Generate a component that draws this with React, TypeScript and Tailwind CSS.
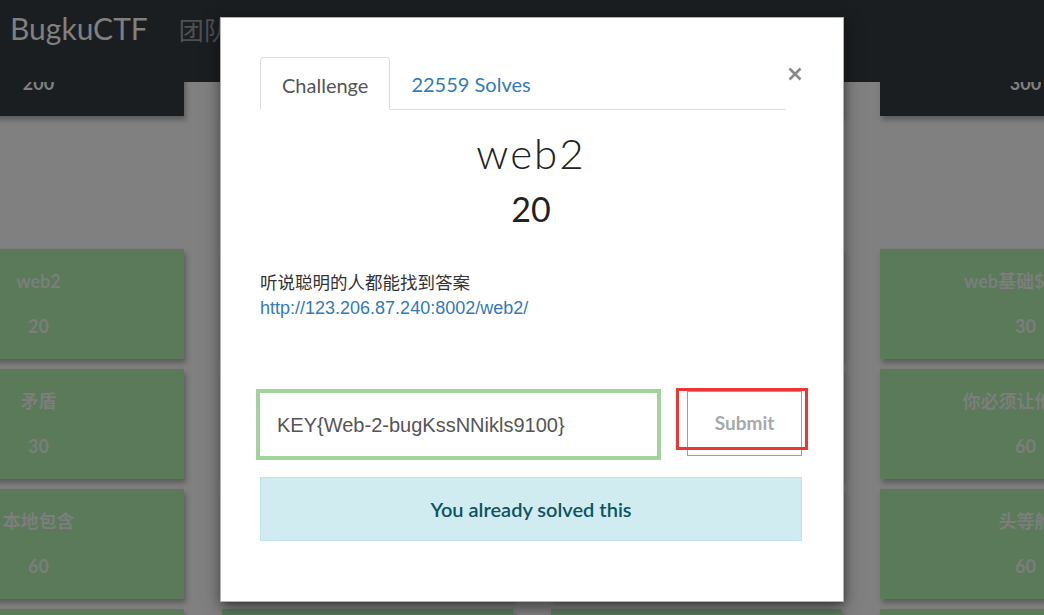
import React from "react";

type Card = { title: string; points: string; dark?: boolean };

const rows: Card[][] = [
  [
    { title: "Web签到", points: "200", dark: true },
    { title: "计算器", points: "100", dark: true },
    { title: "web基础$_POST", points: "200", dark: true },
    { title: "秋名山老司机", points: "300", dark: true },
  ],
  [
    { title: "web2", points: "20" },
    { title: "计算器", points: "30" },
    { title: "web基础$_POST", points: "30" },
    { title: "web基础$_GET", points: "30" },
  ],
  [
    { title: "矛盾", points: "30" },
    { title: "web3", points: "30" },
    { title: "域名解析", points: "30" },
    { title: "你必须让他停下", points: "60" },
  ],
  [
    { title: "本地包含", points: "60" },
    { title: "变量1", points: "60" },
    { title: "web5", points: "60" },
    { title: "头等舱", points: "60" },
  ],
  [
    { title: "网站被黑", points: "80" },
    { title: "管理员系统", points: "80" },
    { title: "web4", points: "80" },
    { title: "flag在index里", points: "80" },
  ],
];

function ChallengeCard({ card }: { card: Card }) {
  return (
    <div
      className={
        "w-[291px] h-[110px] shrink-0 flex flex-col items-center pt-[19px] shadow-[2px_4px_5px_rgba(0,0,0,0.28)] " +
        (card.dark ? "bg-[#1b1e21] text-[#808080]" : "bg-[#5a7a5a] text-[#7b7e7b]")
      }
    >
      <div className="text-[18px] leading-[26px] font-bold whitespace-nowrap">{card.title}</div>
      <div className="mt-[19px] text-[18px] leading-[27px] font-bold">{card.points}</div>
    </div>
  );
}

export default function App() {
  const navItems = ["团队", "排行榜", "下载", "归档", "友链", "论坛"];
  return (
    <div
      className="relative w-[1044px] h-[615px] overflow-hidden bg-[#808080]"
      style={{ fontFamily: "Lato, 'Noto Sans CJK SC', sans-serif" }}
    >
      {/* challenge board */}
      <div className="flex flex-col gap-[10px] pt-[6px] ml-[-107px]">
        {rows.map((row, i) => (
          <div key={i} className={"flex gap-[38px] " + (i === 0 ? "mb-[123px]" : "")}>
            {row.map((c, j) => (
              <ChallengeCard key={j} card={c} />
            ))}
          </div>
        ))}
      </div>

      {/* navbar */}
      <nav className="absolute top-0 left-0 right-0 h-[82px] bg-[#1b1e21] z-10 flex items-start pt-[7px] pl-[10px]">
        <span className="text-[30px] leading-[42px] text-[#808080]">BugkuCTF</span>
        <div className="flex gap-[28px] ml-[31px] mt-[2px]">
          {navItems.map((n) => (
            <span
              key={n}
              className="text-[25px] leading-[40px] text-[#4e5154]"
              style={{ fontFamily: "'Noto Sans CJK SC', sans-serif" }}
            >
              {n}
            </span>
          ))}
        </div>
      </nav>

      {/* modal */}
      <div className="absolute left-[220px] top-[17px] z-20 w-[624px] h-[585px] bg-white border border-black/30 shadow-[0_5px_15px_rgba(0,0,0,0.5)] pt-[39px] pl-[39px] pr-[41px]">
        <div className="flex items-start">
          <div className="flex w-[526px] border-b border-[#dddddd]">
            <div className="h-[53px] -mb-px px-[21px] pt-[2px] flex items-center border border-[#dddddd] border-b-white rounded-t-[4px] bg-white text-[20px] text-[#555555]">
              Challenge
            </div>
            <div className="h-[52px] px-[21px] pt-[2px] flex items-center text-[20px] text-[#337ab7]">
              22559 Solves
            </div>
          </div>
          <button className="ml-[2px] mt-[10px] w-[14px] h-[14px] flex items-center justify-center">
            <svg width="14" height="14" viewBox="0 0 14 14">
              <path d="M1.5 1.5 L12.5 12.5 M12.5 1.5 L1.5 12.5" stroke="#8a8a8a" strokeWidth="2.6" strokeLinecap="butt" />
            </svg>
          </button>
        </div>

        <div className="w-[542px] flex flex-col">
          <div className="mt-[19px] text-center text-[42px] leading-[48px] font-light tracking-[2px] text-[#222222]">
            web2
          </div>
          <div className="mt-[12px] text-center text-[34px] leading-[40px] text-[#222222]">20</div>

          <div
            className="mt-[42px] text-[17.5px] leading-[24px] text-[#333333]"
            style={{ fontFamily: "'Liberation Sans', 'Noto Sans CJK SC', sans-serif" }}
          >
            听说聪明的人都能找到答案
          </div>
          <a
            className="text-[18px] leading-[27px] text-[#337ab7]"
            style={{ fontFamily: "'Liberation Sans', sans-serif" }}
          >
            http://123.206.87.240:8002/web2/
          </a>

          <div className="mt-[67px] flex items-start -ml-[4px]">
            <div
              className="w-[405px] h-[71px] border-4 border-[#a3d39c] flex items-center pl-[17px] text-[20px] text-[#555555]"
              style={{ fontFamily: "'Liberation Sans', sans-serif" }}
            >
              KEY{"{"}Web-2-bugKssNNikls9100{"}"}
            </div>
            <div className="relative ml-[26px] mt-[2px]">
              <div className="w-[115px] h-[65px] border border-[#9a9ea2] flex items-center justify-center text-[19px] font-bold text-[#a6a9ac]">
                Submit
              </div>
              <div className="absolute left-[-11px] top-[-3px] w-[132px] h-[62px] border-[3px] border-[#ec3535]" />
            </div>
          </div>

          <div className="mt-[17px] h-[64px] border border-[#bee5eb] bg-[#d1ecf1] flex items-center justify-center text-[20px] font-semibold text-[#0c5460]">
            You already solved this
          </div>
        </div>
      </div>
    </div>
  );
}
